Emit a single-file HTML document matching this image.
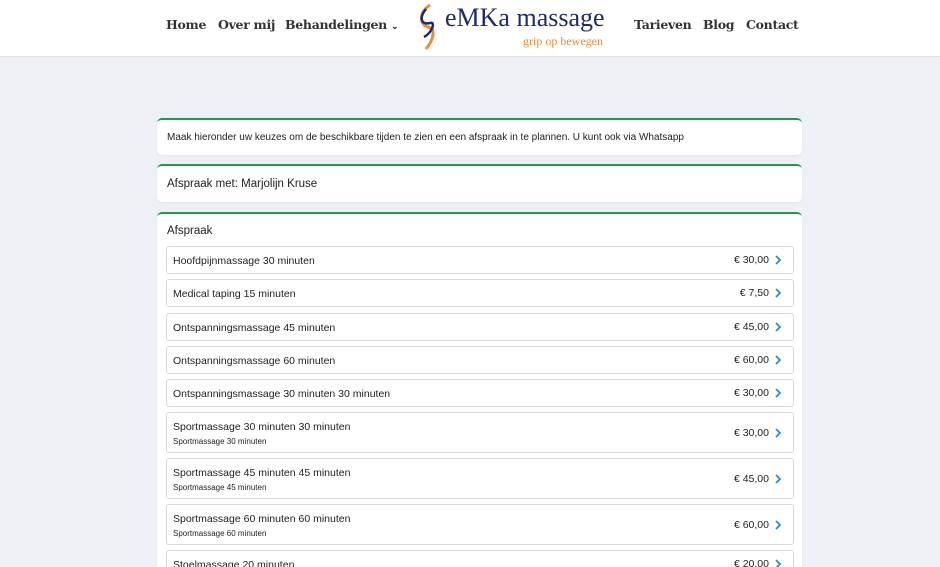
<!DOCTYPE html>
<html style="width:940px;height:567px;overflow:hidden"><head><meta charset="utf-8"><style>
body{margin:0;width:940px;height:567px;overflow:hidden;position:relative;background:#edf0f4;font-family:"Liberation Sans",sans-serif;color:#222}
.hdr{position:absolute;left:0;top:0;width:940px;height:56px;background:#fff;border-bottom:1px solid #dde2e8}
.nav{position:absolute;top:17px;font-family:"DejaVu Serif",serif;font-weight:bold;font-size:12.5px;color:#333;letter-spacing:-0.3px}
.card{position:absolute;left:157px;width:645px;background:#fff;border-top:2px solid #1f9a4a;border-radius:5px;box-shadow:0 1px 2px rgba(0,0,0,.06)}
.item{position:absolute;left:166px;width:626px;border:1px solid #d6d9dd;border-radius:3px;background:#fff;font-size:10.5px}
.item .t{position:absolute;left:6px;top:8px}
.item .s{position:absolute;left:6px;top:24px;font-size:8px}
.item .p{position:absolute;right:24px}
.item svg{position:absolute;right:12px}
</style></head><body>
<div class="hdr">
<span class="nav" style="left:166px">Home</span>
<span class="nav" style="left:218px">Over mij</span>
<span class="nav" style="left:285px">Behandelingen <span style="font-size:9px">⌄</span></span>
<svg style="position:absolute;left:414px;top:3px" width="26" height="48"><path d="M16 2 C4 10 6 22 14 24 C22 26 20 36 12 46" stroke="#e98b3a" stroke-width="3" fill="none"/><path d="M12 6 C4 16 8 22 16 20 C22 18 18 30 10 34" stroke="#1d2b6b" stroke-width="2.5" fill="none"/></svg>
<span style="position:absolute;left:445px;top:3px;font-family:'Liberation Serif',serif;font-size:26px;color:#1d2b6b">eMKa massage</span>
<span style="position:absolute;left:523px;top:34px;font-family:'Liberation Serif',serif;font-size:12px;color:#e98b3a">grip op bewegen</span>
<span class="nav" style="left:634px">Tarieven</span>
<span class="nav" style="left:703px">Blog</span>
<span class="nav" style="left:746px">Contact</span>
</div>
<div class="card" style="top:118px;height:35px"><span style="position:absolute;left:10px;top:12px;font-size:10px">Maak hieronder uw keuzes om de beschikbare tijden te zien en een afspraak in te plannen. U kunt ook via Whatsapp</span></div>
<div class="card" style="top:164px;height:36px"><span style="position:absolute;left:10px;top:12px;font-size:11.5px">Afspraak met: Marjolijn Kruse</span></div>
<div class="card" style="top:212px;height:360px"><span style="position:absolute;left:10px;top:11px;font-size:11.5px">Afspraak</span></div>
<div class="item" style="top:246px;height:26px"><span class="t">Hoofdpijnmassage 30 minuten</span><span class="p" style="top:7px">€ 30,00</span><svg style="top:8px" width="6" height="10"><path d="M1 1 L5 5 L1 9" stroke="#2a8bd6" stroke-width="1.8" fill="none"/></svg></div>
<div class="item" style="top:279px;height:26px"><span class="t">Medical taping 15 minuten</span><span class="p" style="top:7px">€ 7,50</span><svg style="top:8px" width="6" height="10"><path d="M1 1 L5 5 L1 9" stroke="#2a8bd6" stroke-width="1.8" fill="none"/></svg></div>
<div class="item" style="top:313px;height:26px"><span class="t">Ontspanningsmassage 45 minuten</span><span class="p" style="top:7px">€ 45,00</span><svg style="top:8px" width="6" height="10"><path d="M1 1 L5 5 L1 9" stroke="#2a8bd6" stroke-width="1.8" fill="none"/></svg></div>
<div class="item" style="top:346px;height:26px"><span class="t">Ontspanningsmassage 60 minuten</span><span class="p" style="top:7px">€ 60,00</span><svg style="top:8px" width="6" height="10"><path d="M1 1 L5 5 L1 9" stroke="#2a8bd6" stroke-width="1.8" fill="none"/></svg></div>
<div class="item" style="top:379px;height:26px"><span class="t">Ontspanningsmassage 30 minuten 30 minuten</span><span class="p" style="top:7px">€ 30,00</span><svg style="top:8px" width="6" height="10"><path d="M1 1 L5 5 L1 9" stroke="#2a8bd6" stroke-width="1.8" fill="none"/></svg></div>
<div class="item" style="top:412px;height:39px"><span class="t">Sportmassage 30 minuten 30 minuten</span><span class="s">Sportmassage 30 minuten</span><span class="p" style="top:14px">€ 30,00</span><svg style="top:15px" width="6" height="10"><path d="M1 1 L5 5 L1 9" stroke="#2a8bd6" stroke-width="1.8" fill="none"/></svg></div>
<div class="item" style="top:458px;height:39px"><span class="t">Sportmassage 45 minuten 45 minuten</span><span class="s">Sportmassage 45 minuten</span><span class="p" style="top:14px">€ 45,00</span><svg style="top:15px" width="6" height="10"><path d="M1 1 L5 5 L1 9" stroke="#2a8bd6" stroke-width="1.8" fill="none"/></svg></div>
<div class="item" style="top:504px;height:39px"><span class="t">Sportmassage 60 minuten 60 minuten</span><span class="s">Sportmassage 60 minuten</span><span class="p" style="top:14px">€ 60,00</span><svg style="top:15px" width="6" height="10"><path d="M1 1 L5 5 L1 9" stroke="#2a8bd6" stroke-width="1.8" fill="none"/></svg></div>
<div class="item" style="top:550px;height:39px"><span class="t">Stoelmassage 20 minuten</span><span class="p" style="top:7px">€ 20,00</span><svg style="top:8px" width="6" height="10"><path d="M1 1 L5 5 L1 9" stroke="#2a8bd6" stroke-width="1.8" fill="none"/></svg></div>
</body></html>
